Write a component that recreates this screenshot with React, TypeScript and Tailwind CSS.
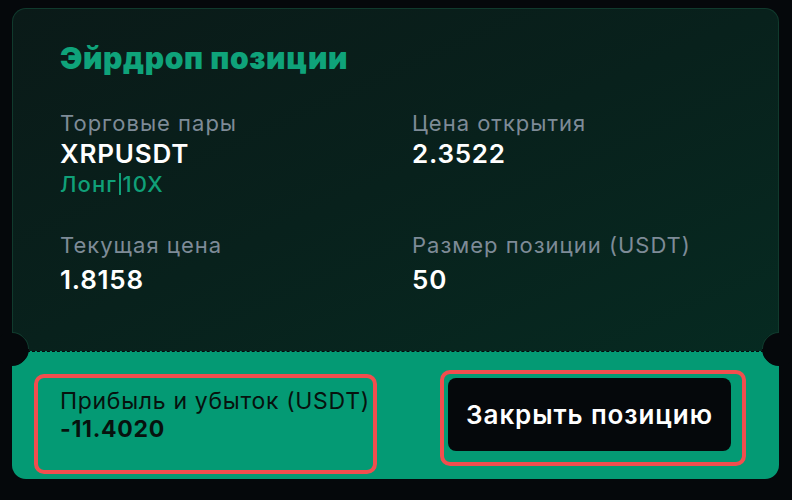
import React from "react";

const font = { fontFamily: "Inter, 'Noto Sans', sans-serif" };

function Field({
  label,
  value,
  extra,
  gap = "mt-[1px]",
}: {
  label: string;
  value: string;
  extra?: React.ReactNode;
  gap?: string;
}) {
  return (
    <div className="flex flex-col">
      <span className="text-[22px] leading-[30px] tracking-[0.045em] text-[#7e8b97]">{label}</span>
      <span className={`text-[26px] leading-[30px] font-semibold tracking-[0.03em] text-white ${gap}`}>{value}</span>
      {extra}
    </div>
  );
}

export default function App() {
  return (
    <div className="w-[792px] h-[500px] bg-[#05080b] pt-[8px] px-[12px]" style={font}>
      <div className="relative w-[767px] h-[471px] flex flex-col">
        {/* top part */}
        <div className="h-[343px] rounded-t-[14px] border border-b-0 border-[#103a2d] bg-gradient-to-br from-[#0a1a18] via-[#08211c] to-[#062a21] pl-[47px] pt-[31px]">
          <h1 className="text-[30px] leading-[36px] font-black tracking-[0.02em] text-[#0fa37a]">Эйрдроп позиции</h1>
          <div className="grid grid-cols-[352px_1fr] mt-[32px] gap-y-[31px]">
            <Field
              label="Торговые пары"
              value="XRPUSDT"
              extra={
                <span className="text-[22px] leading-[30px] font-medium tracking-[0.05em] text-[#10a078] flex items-center">
                  Лонг<span className="mx-[2px] w-[1.5px] h-[22px] bg-[#10a078]" />10X
                </span>
              }
            />
            <Field label="Цена открытия" value="2.3522" />
            <Field label="Текущая цена" value="1.8158" gap="mt-[5px]" />
            <Field label="Размер позиции (USDT)" value="50" gap="mt-[5px]" />
          </div>
        </div>
        {/* bottom part */}
        <div className="flex-1 rounded-b-[14px] bg-[#049a74] border-t border-dashed border-[#05080b] flex justify-between items-start pl-[22px] pr-[33px] pt-[18px]">
          <div className="mt-[4px] w-[343px] h-[100px] rounded-[10px] border-4 border-[#f24e4e] pl-[22px] pt-[9px]">
            <div className="text-[23px] leading-[28px] tracking-[0.03em] text-[#07120e]">Прибыль и убыток (USDT)</div>
            <div className="text-[23px] leading-[28px] font-bold tracking-[0.03em] text-[#07120e]">-11.4020</div>
          </div>
          <div className="w-[306px] h-[96px] rounded-[10px] border-4 border-[#f24e4e] pl-[4px] pt-[4px]">
            <button className="w-[283px] h-[73px] rounded-[8px] bg-[#05080b] text-white text-[26px] font-semibold tracking-[0.035em]">
              Закрыть позицию
            </button>
          </div>
        </div>
        {/* notches */}
        <div className="absolute left-[-17px] top-[324px] w-[34px] h-[34px] rounded-full bg-[#05080b] border border-transparent border-t-[#103a2d] rotate-45" />
        <div className="absolute right-[-17px] top-[324px] w-[34px] h-[34px] rounded-full bg-[#05080b] border border-transparent border-t-[#103a2d] -rotate-45" />
      </div>
    </div>
  );
}
